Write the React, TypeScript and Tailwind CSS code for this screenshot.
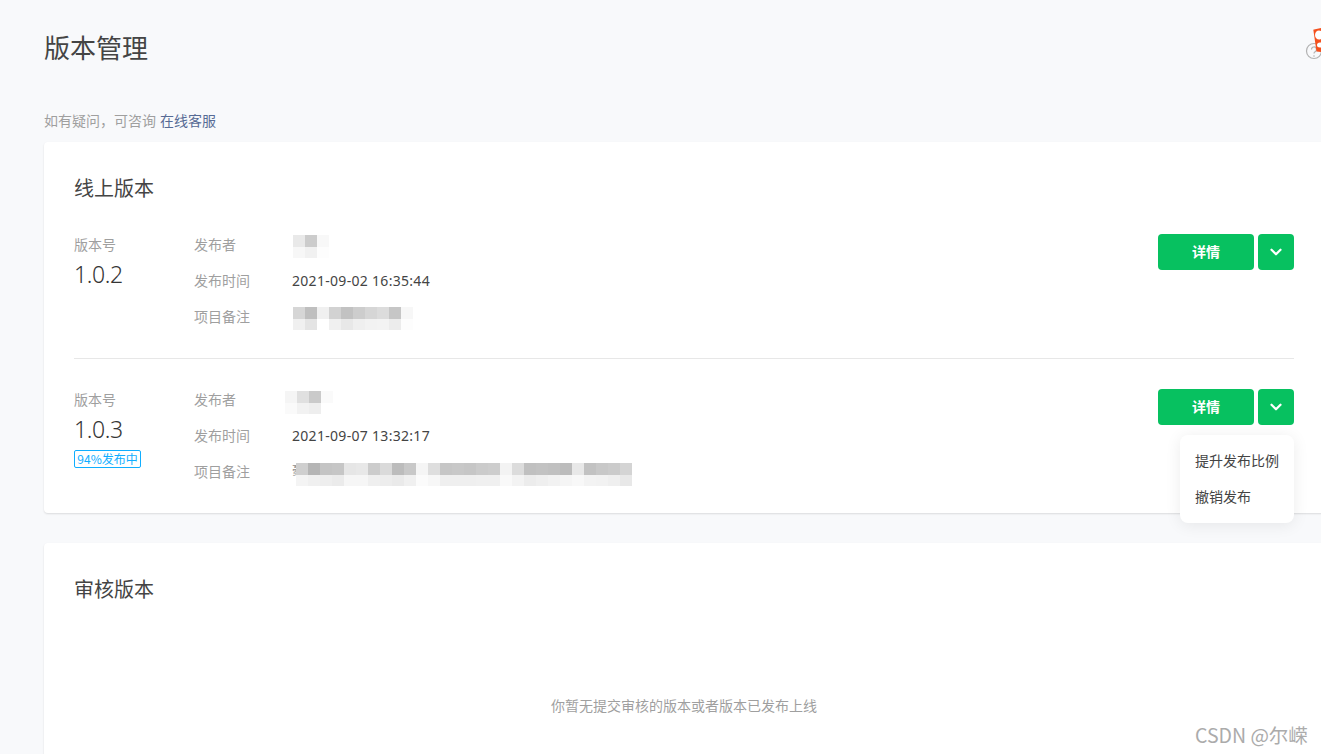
import { ChevronDown } from 'lucide-react';

interface VersionRow {
  version: string;
  time: string;
  tag?: string;
  open?: boolean;
  publisher: string[][];
  publisherClass: string;
  note: string[][];
  noteClass: string;
  notePrefix?: string;
}

const versions: VersionRow[] = [
  {
    version: '1.0.2',
    time: '2021-09-02 16:35:44',
    publisherClass: 'ml-[1px] mt-[9px]',
    publisher: [
      ['#e9e9e9', '#cccccc', '#f8f8f8'],
      ['#f7f7f7', '#f1f1f1', '#fdfdfd'],
    ],
    noteClass: 'ml-[1px] mt-[9px]',
    note: [
      ['#d6d6d6', '#bfbfbf', '#f0f0f0', '#d2d2d2', '#c2c2c2', '#cdcdcd', '#d6d6d6', '#dcdcdc', '#c6c6c6', '#f7f7f7'],
      ['#f0f0f0', '#e4e4e4', '#ffffff', '#f0f0f0', '#e8e8e8', '#efefef', '#f2f2f2', '#f3f3f3', '#ececec', '#fdfdfd'],
    ],
  },
  {
    version: '1.0.3',
    time: '2021-09-07 13:32:17',
    tag: '94%发布中',
    open: true,
    publisherClass: 'ml-[-7px] mt-[10px]',
    publisher: [
      ['#f5f5f5', '#e0e0e0', '#cacaca', '#fafafa'],
      ['#fafafa', '#f2f2f2', '#eeeeee', '#ffffff'],
    ],
    notePrefix: '豪',
    noteClass: 'mt-[10px]',
    note: [
      ['#cfcfcf', '#b5b5b5', '#c4c4c4', '#c6c6c6', '#e6e6e6', '#e8e8e8', '#cccccc', '#dadada', '#bcbcbc', '#c8c8c8', '#f5f5f5', '#dedede', '#c6c6c6', '#c8c8c8', '#c6c6c6', '#cbcbcb', '#cdcdcd', '#f3f3f3', '#dcdcdc', '#c0c0c0', '#c2c2c2', '#c0c0c0', '#bcbcbc', '#e8e8e8', '#c2c2c2', '#c8c8c8', '#cbcbcb', '#d4d4d4'],
      ['#f4f4f4', '#f0f0f0', '#eeeeee', '#ebebeb', '#f6f6f6', '#f6f6f6', '#efefef', '#ededed', '#eaeaea', '#f0f0f0', '#fbfbfb', '#f7f7f7', '#efefef', '#efefef', '#efefef', '#f0f0f0', '#f0f0f0', '#f9f9f9', '#f3f3f3', '#ececec', '#efefef', '#f2f2f2', '#f5f5f5', '#f8f8f8', '#f3f3f3', '#f2f2f2', '#efefef', '#e8e8e8'],
    ],
  },
];

function Mosaic({ rows, className }: { rows: string[][]; className: string }) {
  return (
    <div className={`flex flex-col ${className}`}>
      {rows.map((row, i) => (
        <div key={i} className={`flex ${i === 0 ? 'h-[12px]' : 'h-[11px]'}`}>
          {row.map((color, j) => (
            <div key={j} className="w-[12px]" style={{ backgroundColor: color }} />
          ))}
        </div>
      ))}
    </div>
  );
}

function MetaRow({ label, children }: { label: string; children: React.ReactNode }) {
  return (
    <div className="flex h-[36px]">
      <div className="w-[98px] text-[14px] leading-[36px] text-[#9f9f9f]">{label}</div>
      <div className="flex items-start text-[14px] leading-[36px] text-[#444444]">{children}</div>
    </div>
  );
}

function Version({ row }: { row: VersionRow }) {
  return (
    <div className="relative flex">
      <div className="w-[120px]">
        <div className="h-[36px] text-[14px] leading-[36px] text-[#9f9f9f]">版本号</div>
        <div
          className="mt-[-2px] h-[28px] text-[23px] font-light leading-[28px] tracking-[-0.4px] text-[#353535]"
          style={{ fontFamily: '"Noto Sans", sans-serif' }}
        >
          {row.version}
        </div>
        {row.tag && (
          <div className="mt-[7px] flex h-[18px] w-[67px] items-center justify-center rounded-[2px] border border-[#10aeff] text-[12px] text-[#10aeff]">
            {row.tag}
          </div>
        )}
      </div>
      <div className="flex-1">
        <MetaRow label="发布者">
          <Mosaic rows={row.publisher} className={row.publisherClass} />
        </MetaRow>
        <MetaRow label="发布时间">
          <span className="pt-[1px] tracking-[0.3px]" style={{ fontFamily: '"Noto Sans", sans-serif' }}>
            {row.time}
          </span>
        </MetaRow>
        <MetaRow label="项目备注">
          {row.notePrefix && (
            <span className="block h-[34px] w-[4px] overflow-hidden text-[12px] leading-[34px] text-[#8a8a8a]">{row.notePrefix}</span>
          )}
          <Mosaic rows={row.note} className={row.noteClass} />
        </MetaRow>
      </div>
      <div className="mt-[8px] flex gap-[4px]">
        <button className="flex h-[36px] w-[96px] items-center justify-center rounded-[4px] bg-[#07c160] pb-[2px] text-[14px] font-bold text-white">
          详情
        </button>
        <button className="flex h-[36px] w-[36px] items-center justify-center rounded-[4px] bg-[#07c160] text-white">
          <ChevronDown className="h-[18px] w-[18px]" strokeWidth={3} />
        </button>
      </div>
      {row.open && (
        <div className="absolute right-0 top-[54px] z-10 w-[114px] rounded-[8px] bg-white pb-[9px] pt-[7px] shadow-[0_2px_16px_rgba(0,0,0,0.08)]">
          <div className="flex h-[36px] items-center pl-[15px] text-[14px] text-[#444444]">提升发布比例</div>
          <div className="flex h-[36px] items-center pl-[15px] text-[14px] text-[#444444]">撤销发布</div>
        </div>
      )}
    </div>
  );
}

export default function App() {
  return (
    <div
      className="relative h-[754px] w-[1321px] overflow-hidden bg-[#f8f9fb]"
      style={{ fontFamily: '"Noto Sans CJK SC", "Noto Sans", sans-serif' }}
    >
      <div className="w-[1324px] pl-[44px]">
        <div className="flex h-[111px] items-start pt-[27px] text-[26px] leading-[40px] text-[#444444]">版本管理</div>

        <div className="flex h-[31px] items-start text-[14px] leading-[18px] text-[#9f9f9f]">
          {'如有疑问\uFF0C可咨询'}<a className="ml-[4px] text-[#576b95]">在线客服</a>
        </div>

        <div className="h-[371px] rounded-[4px] bg-white px-[30px] shadow-[0_1px_2px_rgba(0,0,0,0.12)]">
          <div className="flex h-[84px] items-start pt-[31px] text-[20px] leading-[30px] text-[#444444]">线上版本</div>
          <Version row={versions[0]} />
          <div className="mb-[22px] mt-[24px] h-px bg-[#e7e7e7]" />
          <Version row={versions[1]} />
        </div>

        <div className="mt-[30px] h-[260px] rounded-[4px] bg-white px-[30px] shadow-[0_1px_2px_rgba(0,0,0,0.12)]">
          <div className="flex h-[85px] items-start pt-[31px] text-[20px] leading-[30px] text-[#444444]">审核版本</div>
          <div className="pt-[68px] text-center text-[14px] leading-[18px] text-[#9f9f9f]">
            你暂无提交审核的版本或者版本已发布上线
          </div>
        </div>
      </div>

      {/* help icon and the logo cut off by the window edge */}
      <svg className="absolute left-[1304px] top-[26px]" width="17" height="34" viewBox="0 0 17 34">
        <circle cx="10" cy="25" r="7.5" fill="none" stroke="#b2b2b2" strokeWidth="1.2" />
        <path d="M7.5 23.500 a2.500 2.500 0 1 1 3.600 2.200 c-0.800 0.500 -1.100 1 -1.100 1.800" fill="none" stroke="#b2b2b2" strokeWidth="1.2" />
        <circle cx="10" cy="30" r="0.8" fill="#b2b2b2" />
        <path d="M10 3.500 Q9 3 9.500 5 L12.500 25.500 L17 26 L17 2 Z" fill="#f4511e" />
        <ellipse cx="15" cy="9" rx="4" ry="4.500" fill="#ffffff" />
        <ellipse cx="16" cy="19" rx="3" ry="2.500" fill="#ffffff" />
      </svg>

      <div className="absolute left-[1195px] top-[722px] text-[19.5px] leading-[26px] text-[#ababab]">CSDN @尔嵘</div>
    </div>
  );
}
